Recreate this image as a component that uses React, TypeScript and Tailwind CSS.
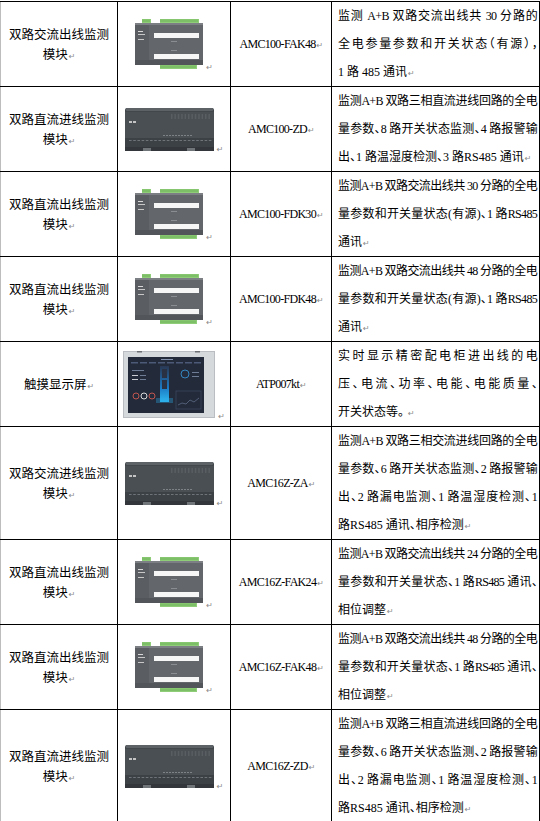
import React from 'react';

type Row = {
  name: string[];
  img: 'a' | 'b' | 'c';
  model: string;
  desc: string[];
  h: string;
};

const rows: Row[] = [
  {
    name: ['双路交流出线监测', '模块'],
    img: 'a',
    model: 'AMC100-FAK48',
    desc: ['监测 A+B 双路交流出线共 30 分路的', '全电参量参数和开关状态（有源），', '1 路 485 通讯'],
    h: 'h-[85px]',
  },
  {
    name: ['双路直流进线监测', '模块'],
    img: 'b',
    model: 'AMC100-ZD',
    desc: ['监测A+B 双路三相直流进线回路的全电', '量参数、8 路开关状态监测、4 路报警输', '出、1 路温湿度检测、3 路RS485 通讯'],
    h: 'h-[85px]',
  },
  {
    name: ['双路直流出线监测', '模块'],
    img: 'a',
    model: 'AMC100-FDK30',
    desc: ['监测A+B 双路交流出线共 30 分路的全电', '量参数和开关量状态(有源)、1 路RS485', '通讯'],
    h: 'h-[85px]',
  },
  {
    name: ['双路直流出线监测', '模块'],
    img: 'a',
    model: 'AMC100-FDK48',
    desc: ['监测A+B 双路交流出线共 48 分路的全电', '量参数和开关量状态(有源)、1 路RS485', '通讯'],
    h: 'h-[85px]',
  },
  {
    name: ['触摸显示屏'],
    img: 'c',
    model: 'ATP007kt',
    desc: ['实时显示精密配电柜进出线的电', '压、电流、功率、电能、电能质量、', '开关状态等。 '],
    h: 'h-[84px]',
  },
  {
    name: ['双路交流进线监测', '模块'],
    img: 'b',
    model: 'AMC16Z-ZA',
    desc: ['监测A+B 双路三相交流进线回路的全电', '量参数、6 路开关状态监测、2 路报警输', '出、2 路漏电监测、1 路温湿度检测、1', '路RS485 通讯、相序检测'],
    h: 'h-[113px]',
  },
  {
    name: ['双路直流出线监测', '模块'],
    img: 'a',
    model: 'AMC16Z-FAK24',
    desc: ['监测A+B 双路交流出线共 24 分路的全电', '量参数和开关量状态、1 路RS485 通讯、', '相位调整'],
    h: 'h-[85px]',
  },
  {
    name: ['双路直流出线监测', '模块'],
    img: 'a',
    model: 'AMC16Z-FAK48',
    desc: ['监测A+B 双路交流出线共 48 分路的全电', '量参数和开关量状态、1 路RS485 通讯、', '相位调整'],
    h: 'h-[85px]',
  },
  {
    name: ['双路直流进线监测', '模块'],
    img: 'b',
    model: 'AMC16Z-ZD',
    desc: ['监测A+B 双路三相直流进线回路的全电', '量参数、6 路开关状态监测、2 路报警输', '出、2 路漏电监测、1 路温湿度检测、1', '路RS485 通讯、相序检测'],
    h: 'h-[112px]',
  },
];

const Mark = () => (
  <span className="font-['DejaVu_Sans',sans-serif] text-[8px] leading-[8px] text-[#8a8a8a] ml-[1px]">↵</span>
);

// green terminal strip with little teeth
const Terminal = ({ x, y, w }: { x: number; y: number; w: number }) => (
  <g>
    <rect x={x} y={y} width={w} height={4} fill="#8fcd78" />
    {Array.from({ length: Math.floor(w / 2) }).map((_, i) => (
      <rect key={i} x={x + i * 2 + 0.5} y={y + 0.5} width={1} height={2.5} fill="#6bb256" />
    ))}
  </g>
);

const ModuleA = () => (
  <svg width="68" height="50" viewBox="0 0 68 50">
    <Terminal x={7} y={0} w={9} />
    <Terminal x={25} y={0} w={39} />
    <rect x="0" y="4" width="68" height="42" fill="#63676b" />
    <rect x="0" y="4" width="68" height="2" fill="#7c8084" />
    <rect x="0" y="6" width="14" height="40" fill="#5a5e62" />
    <rect x="3" y="12" width="5" height="1" fill="#d8d8d8" />
    <rect x="3" y="15" width="7" height="1" fill="#c8c8c8" />
    <rect x="3" y="20" width="6" height="1" fill="#c8c8c8" />
    <rect x="19" y="14" width="45" height="5" fill="#f6f6f6" />
    <rect x="36" y="22" width="6" height="1" fill="#8a8e92" />
    <rect x="19" y="35" width="45" height="5" fill="#f6f6f6" />
    <rect x="36" y="31" width="6" height="1" fill="#8a8e92" />
    <rect x="0" y="41" width="68" height="5" fill="#52565a" />
    <Terminal x={25} y={46} w={37} />
  </svg>
);

const ModuleB = () => (
  <svg width="89" height="43" viewBox="0 0 89 43">
    <rect x="0" y="0" width="89" height="43" rx="2" fill="#42474c" />
    <rect x="1" y="0" width="87" height="3" rx="1" fill="#5d6267" />
    <rect x="0" y="4" width="89" height="26" fill="#4a4f54" />
    <rect x="4" y="13" width="3" height="2" fill="#c4c4c4" />
    <rect x="8" y="13" width="3" height="2" fill="#c4c4c4" />
    {Array.from({ length: 12 }).map((_, i) => (
      <rect key={i} x={46 + i * 3.4} y={6} width={1.5} height={5} fill="#595e63" />
    ))}
    <rect x="0" y="30" width="89" height="9" fill="#3c4146" />
    {Array.from({ length: 20 }).map((_, i) => (
      <rect key={i} x={4 + i * 4.2} y={32} width={2.6} height={1} fill="#6f747a" />
    ))}
    {Array.from({ length: 10 }).map((_, i) => (
      <rect key={i} x={38 + i * 3} y={27} width={2} height={1} fill="#7d8287" />
    ))}
    <rect x="0" y="39" width="89" height="4" fill="#33373b" />
    <rect x="18" y="40" width="8" height="3" fill="#70757a" />
    <rect x="62" y="40" width="8" height="3" fill="#70757a" />
  </svg>
);

const Screen = () => (
  <svg width="92" height="67" viewBox="0 0 92 67">
    <defs>
      <linearGradient id="glow" x1="0" y1="0" x2="0" y2="1">
        <stop offset="0" stopColor="#2a3752" />
        <stop offset="0.6" stopColor="#1b79c4" />
        <stop offset="1" stopColor="#2fb8f0" />
      </linearGradient>
    </defs>
    <rect x="0.5" y="0.5" width="91" height="66" fill="#d6d9dc" stroke="#babec2" />
    <rect x="14" y="0" width="5" height="1.5" fill="#6b6f73" />
    <rect x="72" y="0" width="5" height="1.5" fill="#6b6f73" />
    <rect x="5" y="6" width="76" height="56" fill="#232a3a" />
    {Array.from({ length: 8 }).map((_, i) => (
      <rect key={i} x={8 + i * 9} y={11} width={7} height={1.5} fill="#4c5a78" />
    ))}
    <rect x="38" y="8" width="12" height="1" fill="#8593ae" />
    <rect x="9" y="19" width="12" height="1" fill="#6f7c96" />
    <rect x="9" y="24" width="6" height="1" fill="#c9ccd2" />
    <rect x="17" y="24" width="6" height="1" fill="#6f7c96" />
    <rect x="9" y="28" width="6" height="1" fill="#c9ccd2" />
    <rect x="17" y="28" width="6" height="1" fill="#6f7c96" />
    <rect x="37" y="15" width="9" height="36" fill="url(#glow)" />
    <rect x="39" y="18" width="5" height="9" fill="#2a3142" />
    <rect x="39" y="29" width="5" height="9" fill="#2a3142" />
    <rect x="33" y="47" width="17" height="5" fill="#2aa8e8" opacity="0.35" />
    <circle cx="13" cy="45" r="3" fill="none" stroke="#c0554e" strokeWidth="1" />
    <circle cx="21" cy="45" r="3" fill="none" stroke="#d8d8d8" strokeWidth="1" />
    <circle cx="29" cy="45" r="3" fill="none" stroke="#c0554e" strokeWidth="1" />
    <circle cx="62" cy="23" r="4" fill="none" stroke="#3486c0" strokeWidth="1" />
    <rect x="69" y="21" width="7" height="1" fill="#6f7c96" />
    <rect x="69" y="25" width="7" height="1" fill="#6f7c96" />
    <rect x="53" y="40" width="25" height="18" fill="none" stroke="#3a465f" strokeWidth="0.8" />
    <polyline points="55,54 59,52 63,53 67,49 71,51 76,47" fill="none" stroke="#71819f" strokeWidth="0.6" />
  </svg>
);

const App = () => {
  return (
    <div className="w-[540px] h-[821px] bg-white overflow-hidden">
      <table className="table-fixed border-collapse w-[539px] mt-[1px] text-black">
        <colgroup>
          <col className="w-[117px]" />
          <col className="w-[113px]" />
          <col className="w-[101px]" />
          <col className="w-[208px]" />
        </colgroup>
        <tbody>
          {rows.map((row, i) => (
            <tr key={i} className={row.h}>
              {/* name */}
              <td className="border border-black border-l-[#bdbdbd] border-l-dashed p-0 text-center align-middle font-['Noto_Sans_CJK_SC',sans-serif] text-[12.5px] leading-[20px]">
                {row.name.map((t, j) => (
                  <div key={j} className="h-[20px] whitespace-nowrap">
                    {t}
                    {j === row.name.length - 1 && <Mark />}
                  </div>
                ))}
              </td>

              {/* picture */}
              <td className="border border-black p-0 align-middle">
                <div className="flex items-end justify-center">
                  {row.img === 'a' && <ModuleA />}
                  {row.img === 'b' && <ModuleB />}
                  {row.img === 'c' && <Screen />}
                  <span className="font-['DejaVu_Sans',sans-serif] text-[8px] leading-[8px] text-[#8a8a8a] ml-[3px] mb-[-3px]">↵</span>
                </div>
              </td>

              {/* model */}
              <td className="border border-black p-0 text-center align-middle font-['Liberation_Serif','Noto_Sans_CJK_SC',serif] text-[12px] leading-[20px] tracking-[-0.7px] whitespace-nowrap">
                <div className="h-[20px]">
                  {row.model}
                  <Mark />
                </div>
              </td>

              {/* description */}
              <td className="border border-black pl-[6px] pr-[2px] py-0 align-middle font-['Liberation_Serif','Noto_Sans_CJK_SC',sans-serif] text-[12px] leading-[28px] [font-feature-settings:'halt']">
                {row.desc.map((t, j) =>
                  j < row.desc.length - 1 ? (
                    <div key={j} className="h-[28px] whitespace-nowrap text-justify [text-align-last:justify] tracking-[-0.7px]">
                      {t}
                    </div>
                  ) : (
                    <div key={j} className="h-[28px] whitespace-nowrap">
                      {t}
                      <Mark />
                    </div>
                  )
                )}
              </td>
            </tr>
          ))}
        </tbody>
      </table>
    </div>
  );
};

export default App;
